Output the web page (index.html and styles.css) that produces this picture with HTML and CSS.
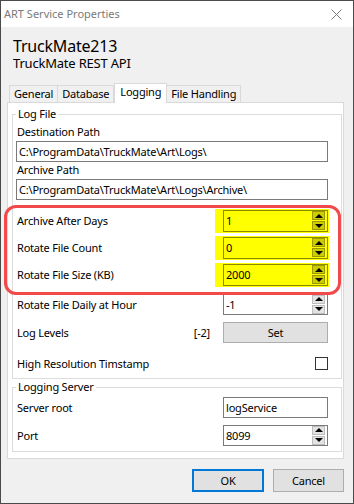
FILE: index.html
```html
<!DOCTYPE html>
<html lang="en">
<head>
  <meta charset="UTF-8">
  <meta name="viewport" content="width=device-width, initial-scale=1.0">
  <title>ART Service Properties</title>
  <link rel="stylesheet" href="styles.css">
</head>
<body>
  <div class="window">
    <div class="titlebar">
      <span class="title">ART Service Properties</span>
      <svg class="close" width="11" height="11" viewBox="0 0 11 11">
        <path d="M0.5 0.5L10.5 10.5M10.5 0.5L0.5 10.5" stroke="#7a7a7a" stroke-width="1" fill="none"/>
      </svg>
    </div>

    <div class="content">
      <div class="app-name">TruckMate213</div>
      <div class="app-sub">TruckMate REST API</div>

      <div class="tabs">
        <div class="tab">General</div>
        <div class="tab">Database</div>
        <div class="tab active">Logging</div>
        <div class="tab">File Handling</div>
      </div>

      <div class="panel">
        <fieldset class="group">
          <legend>Log File</legend>
          <label class="field-label first" for="destPath">Destination Path</label>
          <input class="textbox" type="text" id="destPath" value="C:\ProgramData\TruckMate\Art\Logs\">
          <label class="field-label" for="archivePath">Archive Path</label>
          <input class="textbox" type="text" id="archivePath" value="C:\ProgramData\TruckMate\Art\Logs\Archive\">

          <!-- highlighted settings -->
          <div class="callout">
            <div class="row">
              <span class="label">Archive After Days</span>
              <div class="spin hl">
                <input type="text" value="1">
                <span class="arrows"><span class="up"></span><span class="down"></span></span>
              </div>
            </div>
            <div class="row">
              <span class="label">Rotate File Count</span>
              <div class="spin hl">
                <input type="text" value="0">
                <span class="arrows"><span class="up"></span><span class="down"></span></span>
              </div>
            </div>
            <div class="row">
              <span class="label">Rotate File Size (KB)</span>
              <div class="spin hl">
                <input type="text" value="2000">
                <span class="arrows"><span class="up"></span><span class="down"></span></span>
              </div>
            </div>
          </div>

          <div class="row daily">
            <span class="label">Rotate File Daily at Hour</span>
            <div class="spin">
              <input type="text" value="-1">
              <span class="arrows"><span class="up"></span><span class="down"></span></span>
            </div>
          </div>
          <div class="row levels">
            <span class="label">Log Levels</span>
            <span class="level">[-2]</span>
            <button class="set-btn" type="button">Set</button>
          </div>
          <div class="row hires">
            <span class="label">High Resolution Timstamp</span>
            <span class="check"></span>
          </div>
        </fieldset>

        <fieldset class="group server">
          <legend>Logging Server</legend>
          <div class="row">
            <span class="label">Server root</span>
            <input class="textbox small" type="text" value="logService">
          </div>
          <div class="row port">
            <span class="label">Port</span>
            <div class="spin small">
              <input type="text" value="8099">
              <span class="arrows"><span class="up"></span><span class="down"></span></span>
            </div>
          </div>
        </fieldset>
      </div>

      <div class="footer">
        <button class="btn btn-ok" type="button">OK</button>
        <button class="btn btn-cancel" type="button">Cancel</button>
      </div>
    </div>
  </div>
</body>
</html>
```

FILE: styles.css
```css
/* Reset and base */
* {
  box-sizing: border-box;
  margin: 0;
  padding: 0;
}

body {
  font-family: "Noto Sans", "Open Sans", sans-serif;
  font-size: 11px;
  letter-spacing: -0.2px;
  color: #000;
  background: #f0f0f0;
}

input,
button {
  font: inherit;
  letter-spacing: inherit;
  color: inherit;
}

.window {
  width: 354px;
  height: 504px;
  border: 1px solid #4a4a4a;
  background: #f0f0f0;
  display: flex;
  flex-direction: column;
}

/* Title bar */
.titlebar {
  height: 26px;
  background: #fff;
  display: flex;
  align-items: center;
  justify-content: space-between;
  padding: 0 11px 0 3px;
}

.title {
  color: #7a7a7a;
  letter-spacing: 0;
  line-height: 16px;
}

.close {
  display: block;
}

.content {
  flex: 1;
  display: flex;
  flex-direction: column;
  padding: 0 9px 0 6px;
}

.app-name {
  font-size: 16px;
  line-height: 18px;
  margin: 10px 0 0 6px;
}

.app-sub {
  font-size: 13px;
  line-height: 14px;
  margin: 1px 0 0 6px;
}

/* Tabs */
.tabs {
  display: flex;
  align-items: flex-end;
  height: 19px;
  margin: 13px 0 0 2px;
}

.tab {
  height: 17px;
  line-height: 16px;
  padding: 0 4px;
  border: 1px solid #d9d9d9;
  border-bottom: none;
  background: #f0f0f0;
}

.tab + .tab {
  border-left: none;
}

.tab.active {
  position: relative;
  height: 20px;
  margin-bottom: -1px;
  padding: 0 5px;
  background: #fff;
  border-left: 1px solid #d9d9d9;
}

.panel {
  background: #fff;
  border: 1px solid #d9d9d9;
  padding: 0 1px 6px 4px;
}

/* Group boxes */
.group {
  border: 1px solid #dcdcdc;
  padding: 0 13px 1px 3px;
  margin-top: 3px;
}

.group legend {
  padding: 0 2px;
  line-height: 16px;
}

.group.server {
  margin-top: 0;
  padding-bottom: 4px;
}

.field-label {
  display: block;
  line-height: 16px;
  padding-left: 1px;
}

.field-label.first {
  margin-top: 2px;
}

.textbox {
  display: block;
  width: 100%;
  height: 21px;
  margin-top: 1px;
  padding: 0 2px;
  border: 1px solid #7a7a7a;
  background: #fff;
  outline: none;
}

.textbox.small {
  width: 105px;
  margin-top: 0;
}

/* Rows */
.row {
  display: flex;
  align-items: center;
  height: 27px;
  padding-left: 1px;
}

.row .label {
  flex: 1;
}

.row.daily {
  margin-top: 2px;
  height: 28px;
}

.row.levels {
  height: 28px;
}

.row.hires {
  margin-top: 4px;
}

.server .row {
  height: 24px;
}

.server .row.port {
  margin-top: 4px;
}

.level {
  margin-right: 13px;
}

/* Spin boxes */
.spin {
  width: 105px;
  height: 22px;
  display: flex;
  align-items: center;
  padding: 0 2px;
  border: 1px solid #7a7a7a;
  background: #fff;
}

.spin.small {
  height: 21px;
}

.spin input {
  flex: 1;
  min-width: 0;
  border: none;
  background: transparent;
  outline: none;
}

.arrows {
  display: flex;
  flex-direction: column;
  gap: 1px;
}

.arrows span {
  width: 13px;
  height: 9px;
  display: flex;
  align-items: center;
  justify-content: center;
  background: #e3e3e3;
  border: 1px solid #bdbdbd;
}

.arrows .up::before {
  content: "";
  border-left: 4px solid transparent;
  border-right: 4px solid transparent;
  border-bottom: 4px solid #000;
}

.arrows .down::before {
  content: "";
  border-left: 4px solid transparent;
  border-right: 4px solid transparent;
  border-top: 4px solid #000;
}

/* Yellow highlighter */
.spin.hl {
  background: #ffff00;
  border-color: #8b8b00;
  box-shadow: 0 0 0 1px #ffff00, -7px 0 0 1px #ffff00;
}

.spin.hl .arrows span {
  background: #cccc00;
  border-color: #9a9a00;
}

/* Red annotation around the highlighted rows */
.callout {
  position: relative;
  margin-top: 7px;
}

.callout::after {
  content: "";
  position: absolute;
  top: -2px;
  left: -12px;
  right: -13px;
  bottom: -7px;
  border: 3px solid #f24a4a;
  border-radius: 12px;
  pointer-events: none;
}

.set-btn {
  width: 105px;
  height: 21px;
  background: #e1e1e1;
  border: 1px solid #adadad;
}

.check {
  width: 13px;
  height: 13px;
  border: 1px solid #333;
  background: #fff;
}

/* Dialog buttons */
.footer {
  display: flex;
  justify-content: flex-end;
  gap: 9px;
  margin-top: 10px;
}

.btn {
  height: 23px;
  background: #e1e1e1;
  border: 1px solid #adadad;
}

.btn-ok {
  width: 72px;
  border: 2px solid #0078d7;
}

.btn-cancel {
  width: 71px;
}
```
